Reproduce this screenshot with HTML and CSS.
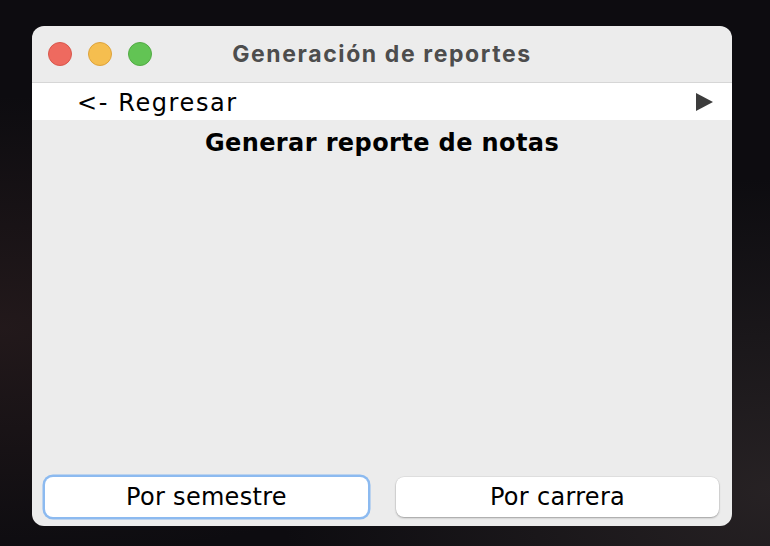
FILE: index.html
```html
<!DOCTYPE html>
<html lang="es">
<head>
<meta charset="utf-8">
<title>Generación de reportes</title>
<link rel="stylesheet" href="styles.css">
</head>
<body>
<div class="desktop">
  <div class="window">
    <div class="titlebar">
      <div class="lights">
        <span class="light red"></span>
        <span class="light yellow"></span>
        <span class="light green"></span>
      </div>
      <div class="title">Generación de reportes</div>
    </div>
    <div class="menu-row">
      <span class="back">&lt;- Regresar</span>
      <svg class="arrow" width="17" height="18" viewBox="0 0 17 18"><polygon points="0,0 17,9 0,18" fill="#3c3c3c"/></svg>
    </div>
    <div class="content">
      <div class="heading">Generar reporte de notas</div>
      <div class="spacer"></div>
      <div class="buttons">
        <button class="btn focused">Por semestre</button>
        <button class="btn">Por carrera</button>
      </div>
    </div>
  </div>
</div>
</body>
</html>
```

FILE: styles.css
```css
html, body {
  margin: 0;
  padding: 0;
  width: 770px;
  height: 546px;
  overflow: hidden;
}
.desktop {
  width: 770px;
  height: 546px;
  box-sizing: border-box;
  padding: 26px 38px 20px 32px;
  background:
    radial-gradient(ellipse at 0% 60%, rgba(60, 40, 40, 0.45), transparent 50%),
    radial-gradient(ellipse at 100% 90%, rgba(70, 60, 60, 0.45), transparent 45%),
    #0d0c10;
}
.window {
  width: 700px;
  height: 500px;
  background: #ececec;
  border-radius: 12px;
  display: flex;
  flex-direction: column;
  overflow: hidden;
  font-family: "DejaVu Sans", sans-serif;
}
.titlebar {
  height: 57px;
  flex: none;
  display: flex;
  align-items: center;
  position: relative;
  border-bottom: 1px solid #d6d6d6;
  box-sizing: border-box;
}
.lights {
  display: flex;
  gap: 16px;
  padding-left: 16px;
}
.light {
  width: 24px;
  height: 24px;
  border-radius: 50%;
  box-sizing: border-box;
}
.red { background: #ee6a5f; border: 1px solid #d9574c; }
.yellow { background: #f5be4f; border: 1px solid #dea33b; }
.green { background: #62c454; border: 1px solid #52ab44; }
.title {
  position: absolute;
  left: 0;
  right: 0;
  text-align: center;
  font-family: "Inter", "Liberation Sans", sans-serif;
  font-weight: 700;
  font-size: 23px;
  letter-spacing: 1.6px;
  color: #4d4d4d;
}
.menu-row {
  height: 37px;
  box-sizing: border-box;
  flex: none;
  background: #ffffff;
  display: flex;
  align-items: center;
  justify-content: space-between;
  padding: 2px 19px 0 45px;
}
.back {
  font-size: 24px;
  letter-spacing: 1.6px;
  color: #000;
}
.arrow { margin-top: -2px; }
.content {
  flex: 1;
  display: flex;
  flex-direction: column;
}
.heading {
  text-align: center;
  font-weight: 700;
  font-size: 24px;
  letter-spacing: 0.4px;
  color: #000;
  margin-top: 9px;
}
.spacer { flex: 1; }
.buttons {
  display: flex;
  gap: 28px;
  padding: 0 13px 9px 13px;
}
.btn {
  flex: 1;
  height: 40px;
  background: #fff;
  border: none;
  border-radius: 8px;
  font-family: "DejaVu Sans", sans-serif;
  font-size: 24px;
  letter-spacing: 0.3px;
  color: #000;
  box-shadow: 0 1px 2px rgba(0,0,0,0.3), 0 0 0 0.5px rgba(0,0,0,0.08);
  padding: 0;
}
.btn.focused {
  box-shadow: 0 0 0 2.5px #8cbaf0;
}
```
